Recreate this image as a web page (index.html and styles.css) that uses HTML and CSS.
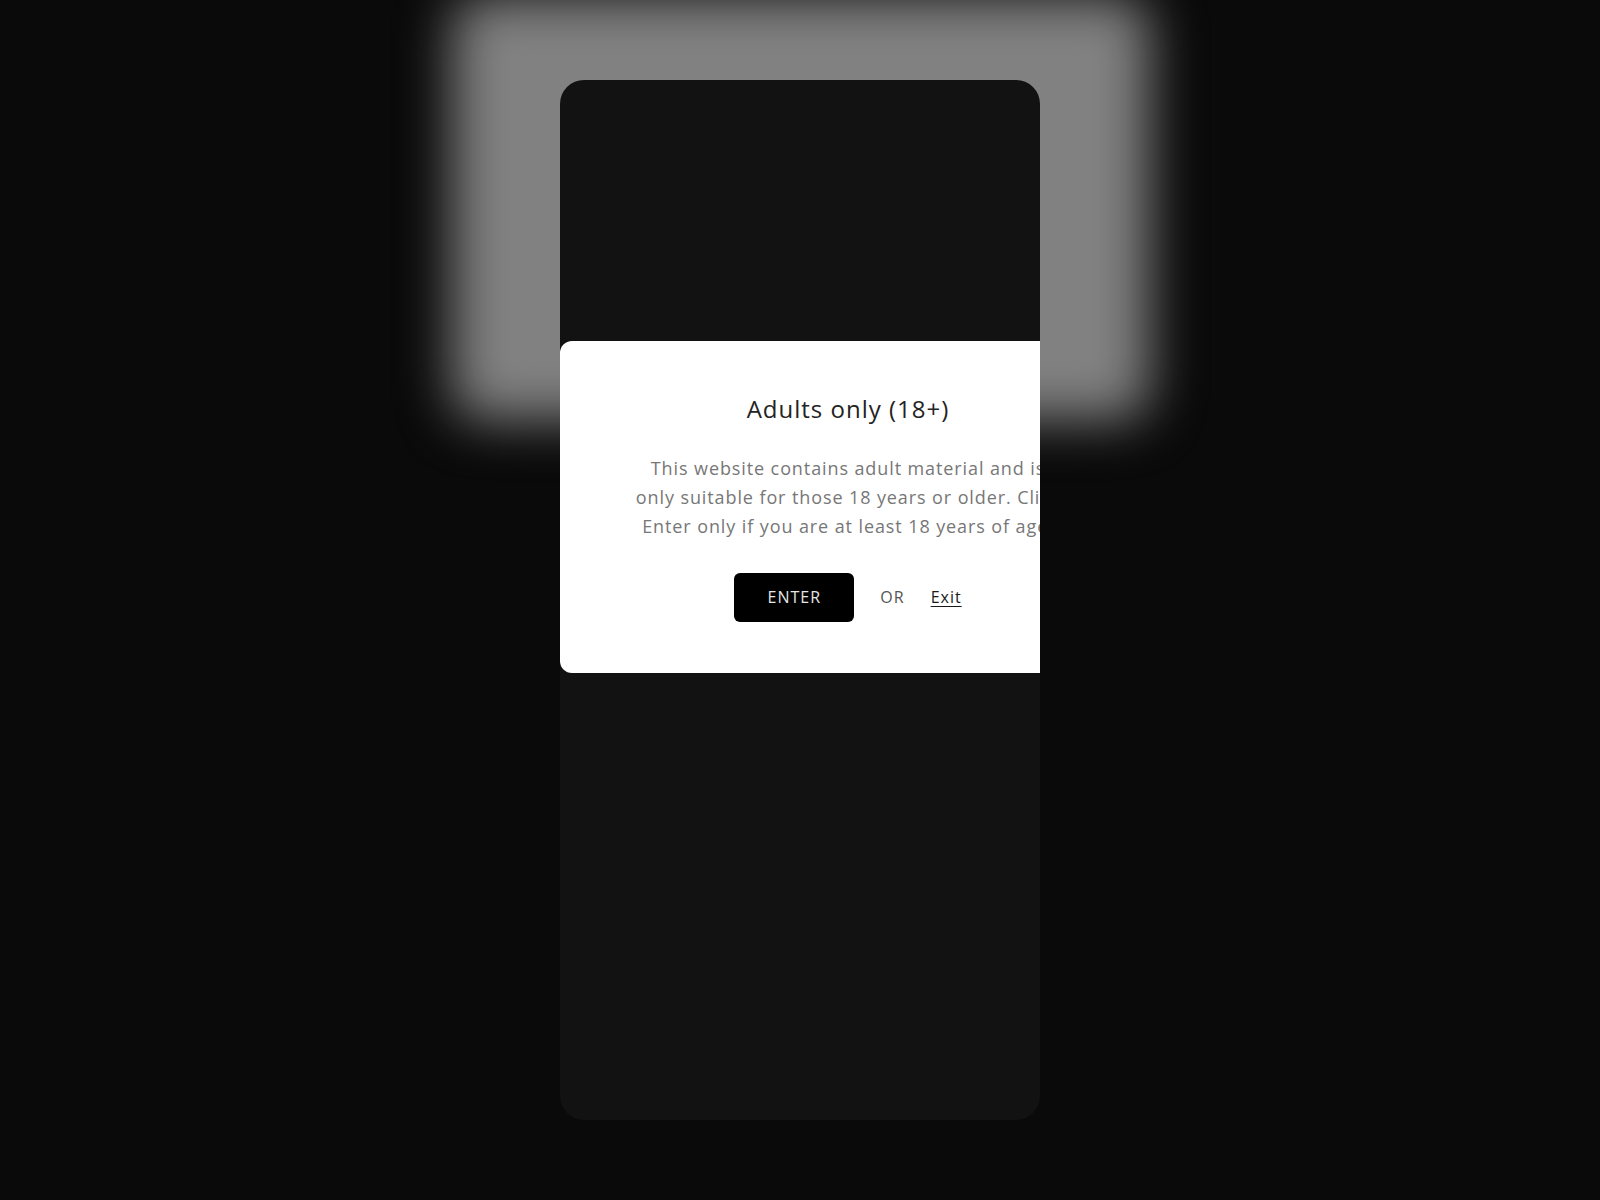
FILE: index.html
```html
<!DOCTYPE html>
<html lang="en">
<head>
<meta charset="utf-8">
<title>Adults only (18+)</title>
<link rel="stylesheet" href="styles.css">
</head>
<body>
<div class="stage">
  <div class="phone">
    <div class="age-modal">
      <h2 class="age-title">Adults only (18+)</h2>
      <p class="age-text">This website contains adult material and is<br>only suitable for those 18 years or older. Click<br>Enter only if you are at least 18 years of age.</p>
      <div class="age-actions">
        <button class="enter-btn" type="button">ENTER</button>
        <span class="or">OR</span>
        <a class="exit-link" href="#">Exit</a>
      </div>
    </div>
  </div>
</div>
</body>
</html>
```
FILE: styles.css
```css
html, body {
  margin: 0;
  padding: 0;
  background: #0a0a0a;
}

body {
  font-family: "Open Sans", "Noto Sans", sans-serif;
  min-height: 1200px;
  overflow: hidden;
}

.stage {
  position: relative;
  display: flex;
  justify-content: center;
  padding-top: 80px;
  min-height: 1120px;
}

.stage::before {
  content: "";
  position: absolute;
  left: 452px;
  top: -4px;
  width: 698px;
  height: 424px;
  border-radius: 30px;
  background: #818181;
  filter: blur(26px);
}

.phone {
  position: relative;
  z-index: 1;
  width: 480px;
  height: 1040px;
  background: #121212;
  border-radius: 24px;
  overflow: hidden;
  padding-top: 261px;
  box-sizing: border-box;
}

.age-modal {
  width: 576px;
  box-sizing: border-box;
  background: #ffffff;
  border-radius: 12px;
  padding: 52px 20px 51px;
  text-align: center;
}

.age-title {
  margin: 0;
  font-size: 24px;
  line-height: 1.3;
  font-weight: 400;
  letter-spacing: 1px;
  color: #232323;
}

.age-text {
  margin: 30px 0 0;
  font-size: 18px;
  line-height: 1.6;
  letter-spacing: 0.9px;
  color: #777;
}

.age-actions {
  margin-top: 32px;
  display: flex;
  justify-content: center;
  align-items: center;
  gap: 26px;
}

.enter-btn {
  width: 120px;
  height: 49px;
  border: none;
  border-radius: 6px;
  background: #000;
  color: #e6e6e6;
  font-family: inherit;
  font-size: 16px;
  letter-spacing: 1px;
  padding: 0;
}

.or {
  font-size: 16px;
  letter-spacing: 1px;
  color: #555;
}

.exit-link {
  font-size: 16px;
  letter-spacing: 1px;
  color: #1a1a1a;
  text-decoration: underline;
  text-underline-offset: 3px;
}
```
